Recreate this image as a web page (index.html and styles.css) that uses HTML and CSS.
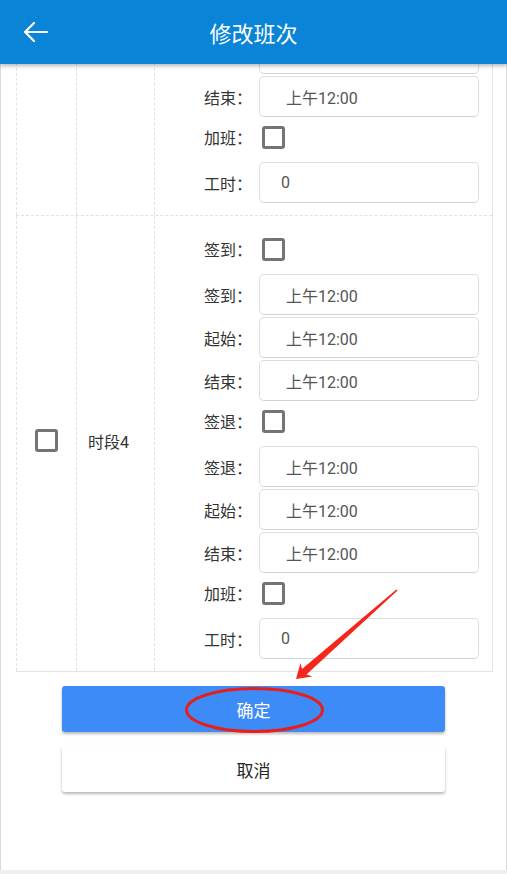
FILE: index.html
```html
<!DOCTYPE html>
<html lang="zh">
<head>
<meta charset="utf-8">
<title>修改班次</title>
<link rel="stylesheet" href="styles.css">
</head>
<body>
<div class="page">
  <header class="topbar">
    <svg class="back" width="26" height="22" viewBox="0 0 26 22"><path d="M2 11H24M2 11L11 2M2 11L11 20" fill="none" stroke="#fff" stroke-width="2.2" stroke-linecap="round" stroke-linejoin="round"/></svg>
    <h1 class="title">修改班次</h1>
  </header>
  <main class="content">
    <div class="scroller">
      <div class="table">
        <div class="row">
          <div class="c1"></div>
          <div class="c2"></div>
          <div class="c3">
            <div class="inrow"><span class="lbl"></span><span class="inp"></span></div>
            <div class="inrow"><span class="lbl">结束：</span><span class="inp">上午12:00</span></div>
            <div class="cbrow"><span class="lbl">加班：</span><span class="cb"></span></div>
            <div class="inrow"><span class="lbl">工时：</span><span class="inp num">0</span></div>
          </div>
        </div>
        <div class="row">
          <div class="c1"><span class="cb"></span></div>
          <div class="c2">时段4</div>
          <div class="c3">
            <div class="cbrow"><span class="lbl">签到：</span><span class="cb"></span></div>
            <div class="inrow"><span class="lbl">签到：</span><span class="inp">上午12:00</span></div>
            <div class="inrow"><span class="lbl">起始：</span><span class="inp">上午12:00</span></div>
            <div class="inrow"><span class="lbl">结束：</span><span class="inp">上午12:00</span></div>
            <div class="cbrow"><span class="lbl">签退：</span><span class="cb"></span></div>
            <div class="inrow"><span class="lbl">签退：</span><span class="inp">上午12:00</span></div>
            <div class="inrow"><span class="lbl">起始：</span><span class="inp">上午12:00</span></div>
            <div class="inrow"><span class="lbl">结束：</span><span class="inp">上午12:00</span></div>
            <div class="cbrow"><span class="lbl">加班：</span><span class="cb"></span></div>
            <div class="inrow"><span class="lbl">工时：</span><span class="inp num">0</span></div>
          </div>
        </div>
      </div>
      <div class="actions">
        <button class="btn primary">确定</button>
        <button class="btn plain">取消</button>
      </div>
    </div>
  </main>
</div>
<svg class="annot" width="507" height="874" viewBox="0 0 507 874">
  <polygon points="296,679 312.5,676.5 306.5,674.4 397.6,590.6 396.4,589.4 302,669 300.5,663" fill="#f5261b"/>
  <ellipse cx="254.5" cy="710" rx="68" ry="21.5" fill="none" stroke="#e81e1e" stroke-width="3"/>
</svg>
</body>
</html>
```
FILE: styles.css
```css
* { box-sizing: border-box; }
html, body { margin: 0; padding: 0; }
body {
  background: #efefef;
  font-family: Roboto, "Noto Sans CJK SC", sans-serif;
  width: 507px;
  height: 874px;
  overflow: hidden;
  position: relative;
}
.page {
  height: 870px;
  background: #fff;
  border-left: 1px solid #d9d9d9;
  border-right: 1px solid #d9d9d9;
  display: flex;
  flex-direction: column;
}
.topbar {
  height: 64px;
  flex: none;
  background: #0a84d6;
  display: flex;
  align-items: center;
  justify-content: center;
  position: relative;
  z-index: 2;
  box-shadow: 0 2px 4px rgba(0,0,0,0.28);
  margin: 0 -1px;
}
.back {
  position: absolute;
  left: 23px;
  top: 21px;
}
.title {
  margin: 0;
  font-size: 22px;
  font-weight: 400;
  color: #fff;
  font-family: "Noto Sans CJK SC", sans-serif;
}
.content {
  flex: 1;
  overflow: hidden;
}
.scroller {
  margin-top: -47px;
}
.table {
  margin: 0 13px 0 15px;
  border-right: 1px solid #e3e3e3;
  border-bottom: 1px solid #e3e3e3;
}
.row {
  display: flex;
  border-top: 1px dashed #e2e2e2;
}
.c1 {
  width: 60px;
  border-left: 1px dashed #e2e2e2;
  display: flex;
  align-items: center;
  justify-content: center;
  padding-bottom: 6px;
}
.c2 {
  width: 78px;
  border-left: 1px dashed #e2e2e2;
  display: flex;
  align-items: center;
  padding-left: 11px;
  padding-bottom: 6px;
  font-size: 16px;
  color: #333;
  font-family: Roboto, "Noto Sans CJK SC", sans-serif;
}
.c3 {
  flex: 1;
  border-left: 1px dashed #e2e2e2;
  padding: 14px 13px 11px 9px;
  display: flex;
  flex-direction: column;
}
.cbrow {
  height: 43px;
  padding-top: 8px;
  display: flex;
  align-items: flex-start;
}
.cbrow .lbl { line-height: 22px; }
.inrow {
  height: 41px;
  margin: 1px 0;
  display: flex;
  align-items: center;
}
.lbl {
  width: 88px;
  margin-right: 7px;
  text-align: right;
  font-size: 16px;
  color: #333;
  font-family: "Noto Sans CJK SC", sans-serif;
  flex: none;
}
.inp {
  flex: 1;
  height: 41px;
  border: 1px solid #dedede;
  border-bottom-color: #d2d2d2;
  border-radius: 5px;
  padding-left: 26px;
  display: flex;
  align-items: center;
  font-size: 16px;
  color: #555;
}
.inp.num { padding-left: 21px; }
.cb {
  display: inline-block;
  width: 23px;
  height: 23px;
  border: 3px solid #747474;
  border-radius: 3px;
  margin-left: 3px;
  flex: none;
}
.c1 .cb { margin-left: 0; }
.actions {
  padding: 14px 61px 0 61px;
  display: flex;
  flex-direction: column;
  gap: 14px;
}
.btn {
  height: 46px;
  border: none;
  border-radius: 3px;
  font-size: 17px;
  font-family: "Noto Sans CJK SC", sans-serif;
  box-shadow: 0 2px 3px rgba(0,0,0,0.28);
  padding: 0;
}
.primary {
  background: #3c8bf6;
  color: #fff;
}
.plain {
  background: #fff;
  color: #222;
}
.annot {
  position: absolute;
  left: 0;
  top: 0;
  pointer-events: none;
}
```
